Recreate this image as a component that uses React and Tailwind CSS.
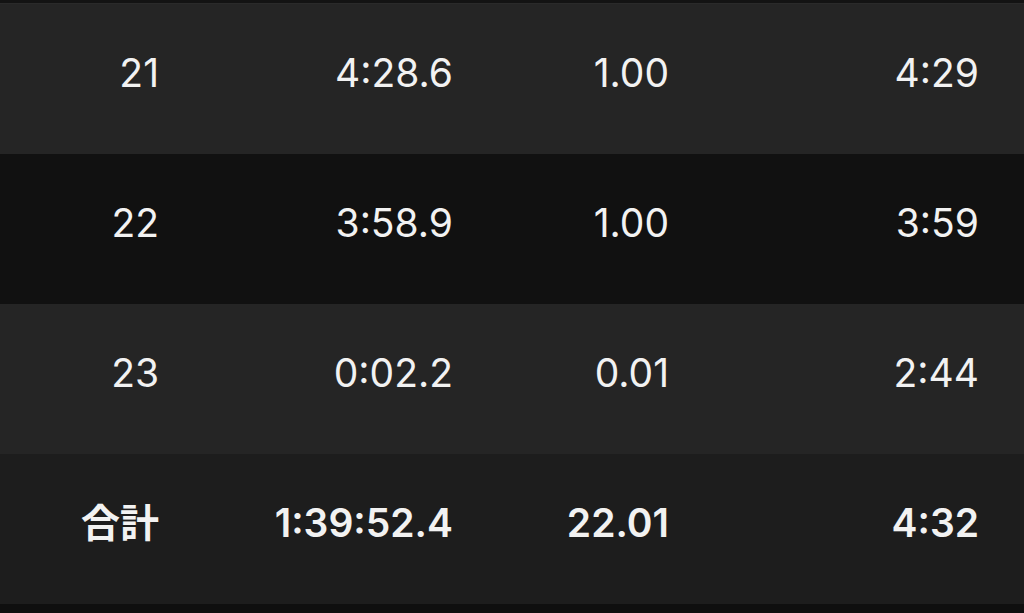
export default function App() {
  const rows = [
    { n: "21", t: "4:28.6", d: "1.00", p: "4:29", bg: "bg-[#252525]" },
    { n: "22", t: "3:58.9", d: "1.00", p: "3:59", bg: "bg-[#111111]" },
    { n: "23", t: "0:02.2", d: "0.01", p: "2:44", bg: "bg-[#252525]" },
  ];
  return (
    <div
      className="w-[1024px] h-[613px] bg-[#0f0f0f] flex flex-col text-[#f2f2f2] overflow-hidden"
      style={{ fontFamily: 'Inter, "Noto Sans CJK JP", sans-serif' }}
    >
      <div className="h-[3px] bg-[#131313]" />
      <div className="h-[1px] bg-[#2a2a2a]" />
      {rows.map((r) => (
        <div
          key={r.n}
          className={`h-[150px] ${r.bg} grid grid-cols-[159px_294px_216px_310px] items-center text-right text-[39px] font-normal leading-none pb-[13px]`}
        >
          <div>{r.n}</div>
          <div>{r.t}</div>
          <div>{r.d}</div>
          <div>{r.p}</div>
        </div>
      ))}
      <div className="h-[150px] bg-[#1d1d1d] grid grid-cols-[159px_294px_216px_310px] items-center text-right text-[39px] font-semibold leading-none pb-[13px]">
        <div>合計</div>
        <div>1:39:52.4</div>
        <div>22.01</div>
        <div>4:32</div>
      </div>
      <div className="flex-1 bg-[#0f0f0f]" />
    </div>
  );
}
